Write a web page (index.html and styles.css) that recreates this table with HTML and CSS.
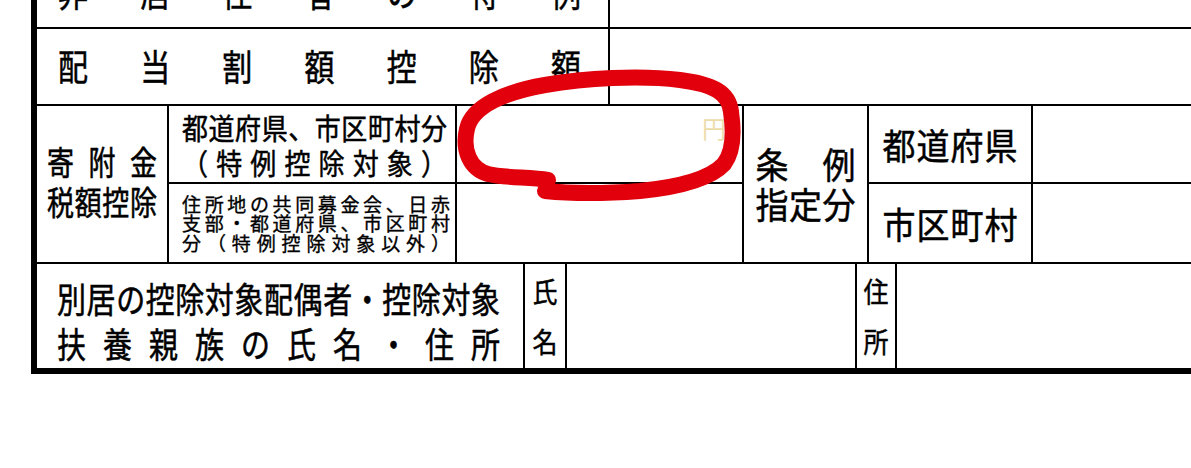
FILE: index.html
```html
<!DOCTYPE html>
<html lang="ja">
<head>
<meta charset="utf-8">
<title>寄附金税額控除</title>
<link rel="stylesheet" href="styles.css">
</head>
<body>
<div class="sheet">
  <div class="form">
    <div class="row r-main r0">
      <div class="cell spread"><span class="jt">非居住者の特例</span></div>
      <div class="cell"></div>
    </div>
    <div class="row r-main r1">
      <div class="cell spread"><span class="jt">配当割額控除額</span></div>
      <div class="cell"></div>
    </div>
    <div class="row r-kifu">
      <div class="cell kifu-a">
        <div class="stack">
          <span class="jt">寄附金</span>
          <span class="jt">税額控除</span>
        </div>
      </div>
      <div class="cell kifu-b1">
        <span class="jt">都道府県、市区町村分</span>
        <span class="jt">（特例控除対象）</span>
      </div>
      <div class="cell kifu-c1"><span class="yen">円</span></div>
      <div class="cell kifu-d">
        <div class="stack">
          <span class="jt">条例</span>
          <span class="jt">指定分</span>
        </div>
      </div>
      <div class="cell kifu-e"><span class="jt">都道府県</span></div>
      <div class="cell"></div>
      <div class="cell kifu-b2">
        <span class="jt">住所地の共同募金会、日赤</span>
        <span class="jt">支部・都道府県、市区町村</span>
        <span class="jt">分（特例控除対象以外）</span>
      </div>
      <div class="cell"></div>
      <div class="cell kifu-e"><span class="jt">市区町村</span></div>
      <div class="cell"></div>
    </div>
    <div class="row r-bekkyo">
      <div class="cell bekkyo">
        <div class="stack">
          <span class="jt">別居の控除対象配偶者・控除対象</span>
          <span class="jt">扶養親族の氏名・住所</span>
        </div>
      </div>
      <div class="cell mini"><span>氏</span><span>名</span></div>
      <div class="cell"></div>
      <div class="cell mini"><span>住</span><span>所</span></div>
      <div class="cell"></div>
    </div>
  </div>
  <svg class="scribble" width="1191" height="468" viewBox="0 0 1191 468" aria-hidden="true">
    <path d="M 548 180 C 530 177, 505 178, 488 174 C 470 169, 462 150, 467 129 C 472 106, 505 92, 545 85 C 585 78, 640 75, 680 80 C 712 84, 729 92, 731 112 C 734 132, 734 151, 724 164 C 710 179, 680 187, 640 191 C 600 194, 565 193, 545 191" />
  </svg>
</div>
</body>
</html>
```

FILE: styles.css
```css
html, body {
  margin: 0;
  padding: 0;
  background: #fff;
  overflow: hidden;
}

body {
  font-family: "Noto Sans CJK JP", "Noto Sans", sans-serif;
  color: #000;
}

.sheet {
  position: relative;
  width: 1191px;
  height: 468px;
  overflow: hidden;
  background: #fff;
}

.form {
  margin: -42px 0 0 31px;
  width: 1200px;
  border-left: 6px solid #000;
  border-bottom: 6px solid #000;
  background: #000;
  display: flex;
  flex-direction: column;
  gap: 2px;
}

.row {
  display: grid;
  gap: 2px;
}

.cell {
  background: #fff;
}

.jt {
  display: block;
  text-align: justify;
  text-align-last: justify;
  -webkit-text-stroke: 0.45px #000;
}

.stack {
  display: flex;
  flex-direction: column;
}

/* top rows */
.r-main {
  grid-template-columns: 571px 1fr;
}

.r0 { height: 69px; }
.r1 { height: 75px; }

.spread {
  display: flex;
  align-items: center;
  padding: 0 27px 3px 21px;
  font-size: 30px;
  line-height: 1;
}

.spread .jt {
  flex: 1;
  transform: scaleY(1.2);
}

/* 寄附金 block */
.r-kifu {
  grid-template-columns: 130px 286px 285px 123px 162px 1fr;
  grid-template-rows: 76px 78px;
}

.kifu-a {
  grid-row: span 2;
  display: flex;
  align-items: center;
  justify-content: center;
  padding-bottom: 4px;
  font-size: 27px;
  line-height: 40px;
}

.kifu-a .stack {
  width: 110px;
}

.kifu-a .jt {
  transform: scaleY(1.22);
}

.kifu-b1 {
  display: flex;
  flex-direction: column;
  justify-content: center;
  padding: 2px 8px 0 13px;
  font-size: 26px;
  line-height: 35px;
}

.kifu-b1 .jt {
  transform: scaleY(1.12);
}

.kifu-b2 {
  display: flex;
  flex-direction: column;
  justify-content: center;
  padding: 0 5px 0 13px;
  font-size: 19px;
  line-height: 19.5px;
}

.kifu-b2 .jt {
  -webkit-text-stroke: 0.35px #000;
}

.kifu-c1 {
  display: flex;
  justify-content: flex-end;
  align-items: flex-start;
  padding: 10px 16px 0 0;
}

.yen {
  font-size: 24px;
  line-height: 1;
  color: #ecdcaa;
}

.kifu-d {
  grid-row: span 2;
  display: flex;
  align-items: center;
  justify-content: center;
  padding-top: 0;
  font-size: 33px;
  line-height: 40px;
}

.kifu-d .stack {
  width: 100px;
}

.kifu-d .jt {
  transform: scaleY(1.1);
}

.kifu-e {
  display: flex;
  align-items: center;
  justify-content: center;
  padding-top: 2px;
  font-size: 33px;
  line-height: 1;
}

.kifu-e .jt {
  width: 135px;
  transform: scaleY(1.1);
}

/* 別居 row */
.r-bekkyo {
  grid-template-columns: 486px 40px 288px 38px 1fr;
  height: 104px;
}

.bekkyo {
  display: flex;
  align-items: center;
  padding: 7px 0 0 20px;
  font-size: 29px;
  line-height: 45px;
}

.bekkyo .stack {
  width: 443px;
}

.bekkyo .jt {
  transform: scaleY(1.2);
}

.mini {
  display: flex;
  flex-direction: column;
  align-items: center;
  justify-content: center;
  font-size: 25px;
  line-height: 50px;
}

.mini span {
  display: block;
  transform: scaleY(1.12);
  -webkit-text-stroke: 0.4px #000;
}

/* hand-drawn red mark */
.scribble {
  position: absolute;
  left: 0;
  top: 0;
  pointer-events: none;
}

.scribble path {
  fill: none;
  stroke: #e1000b;
  stroke-width: 16;
  stroke-linecap: round;
  stroke-linejoin: round;
}
```
